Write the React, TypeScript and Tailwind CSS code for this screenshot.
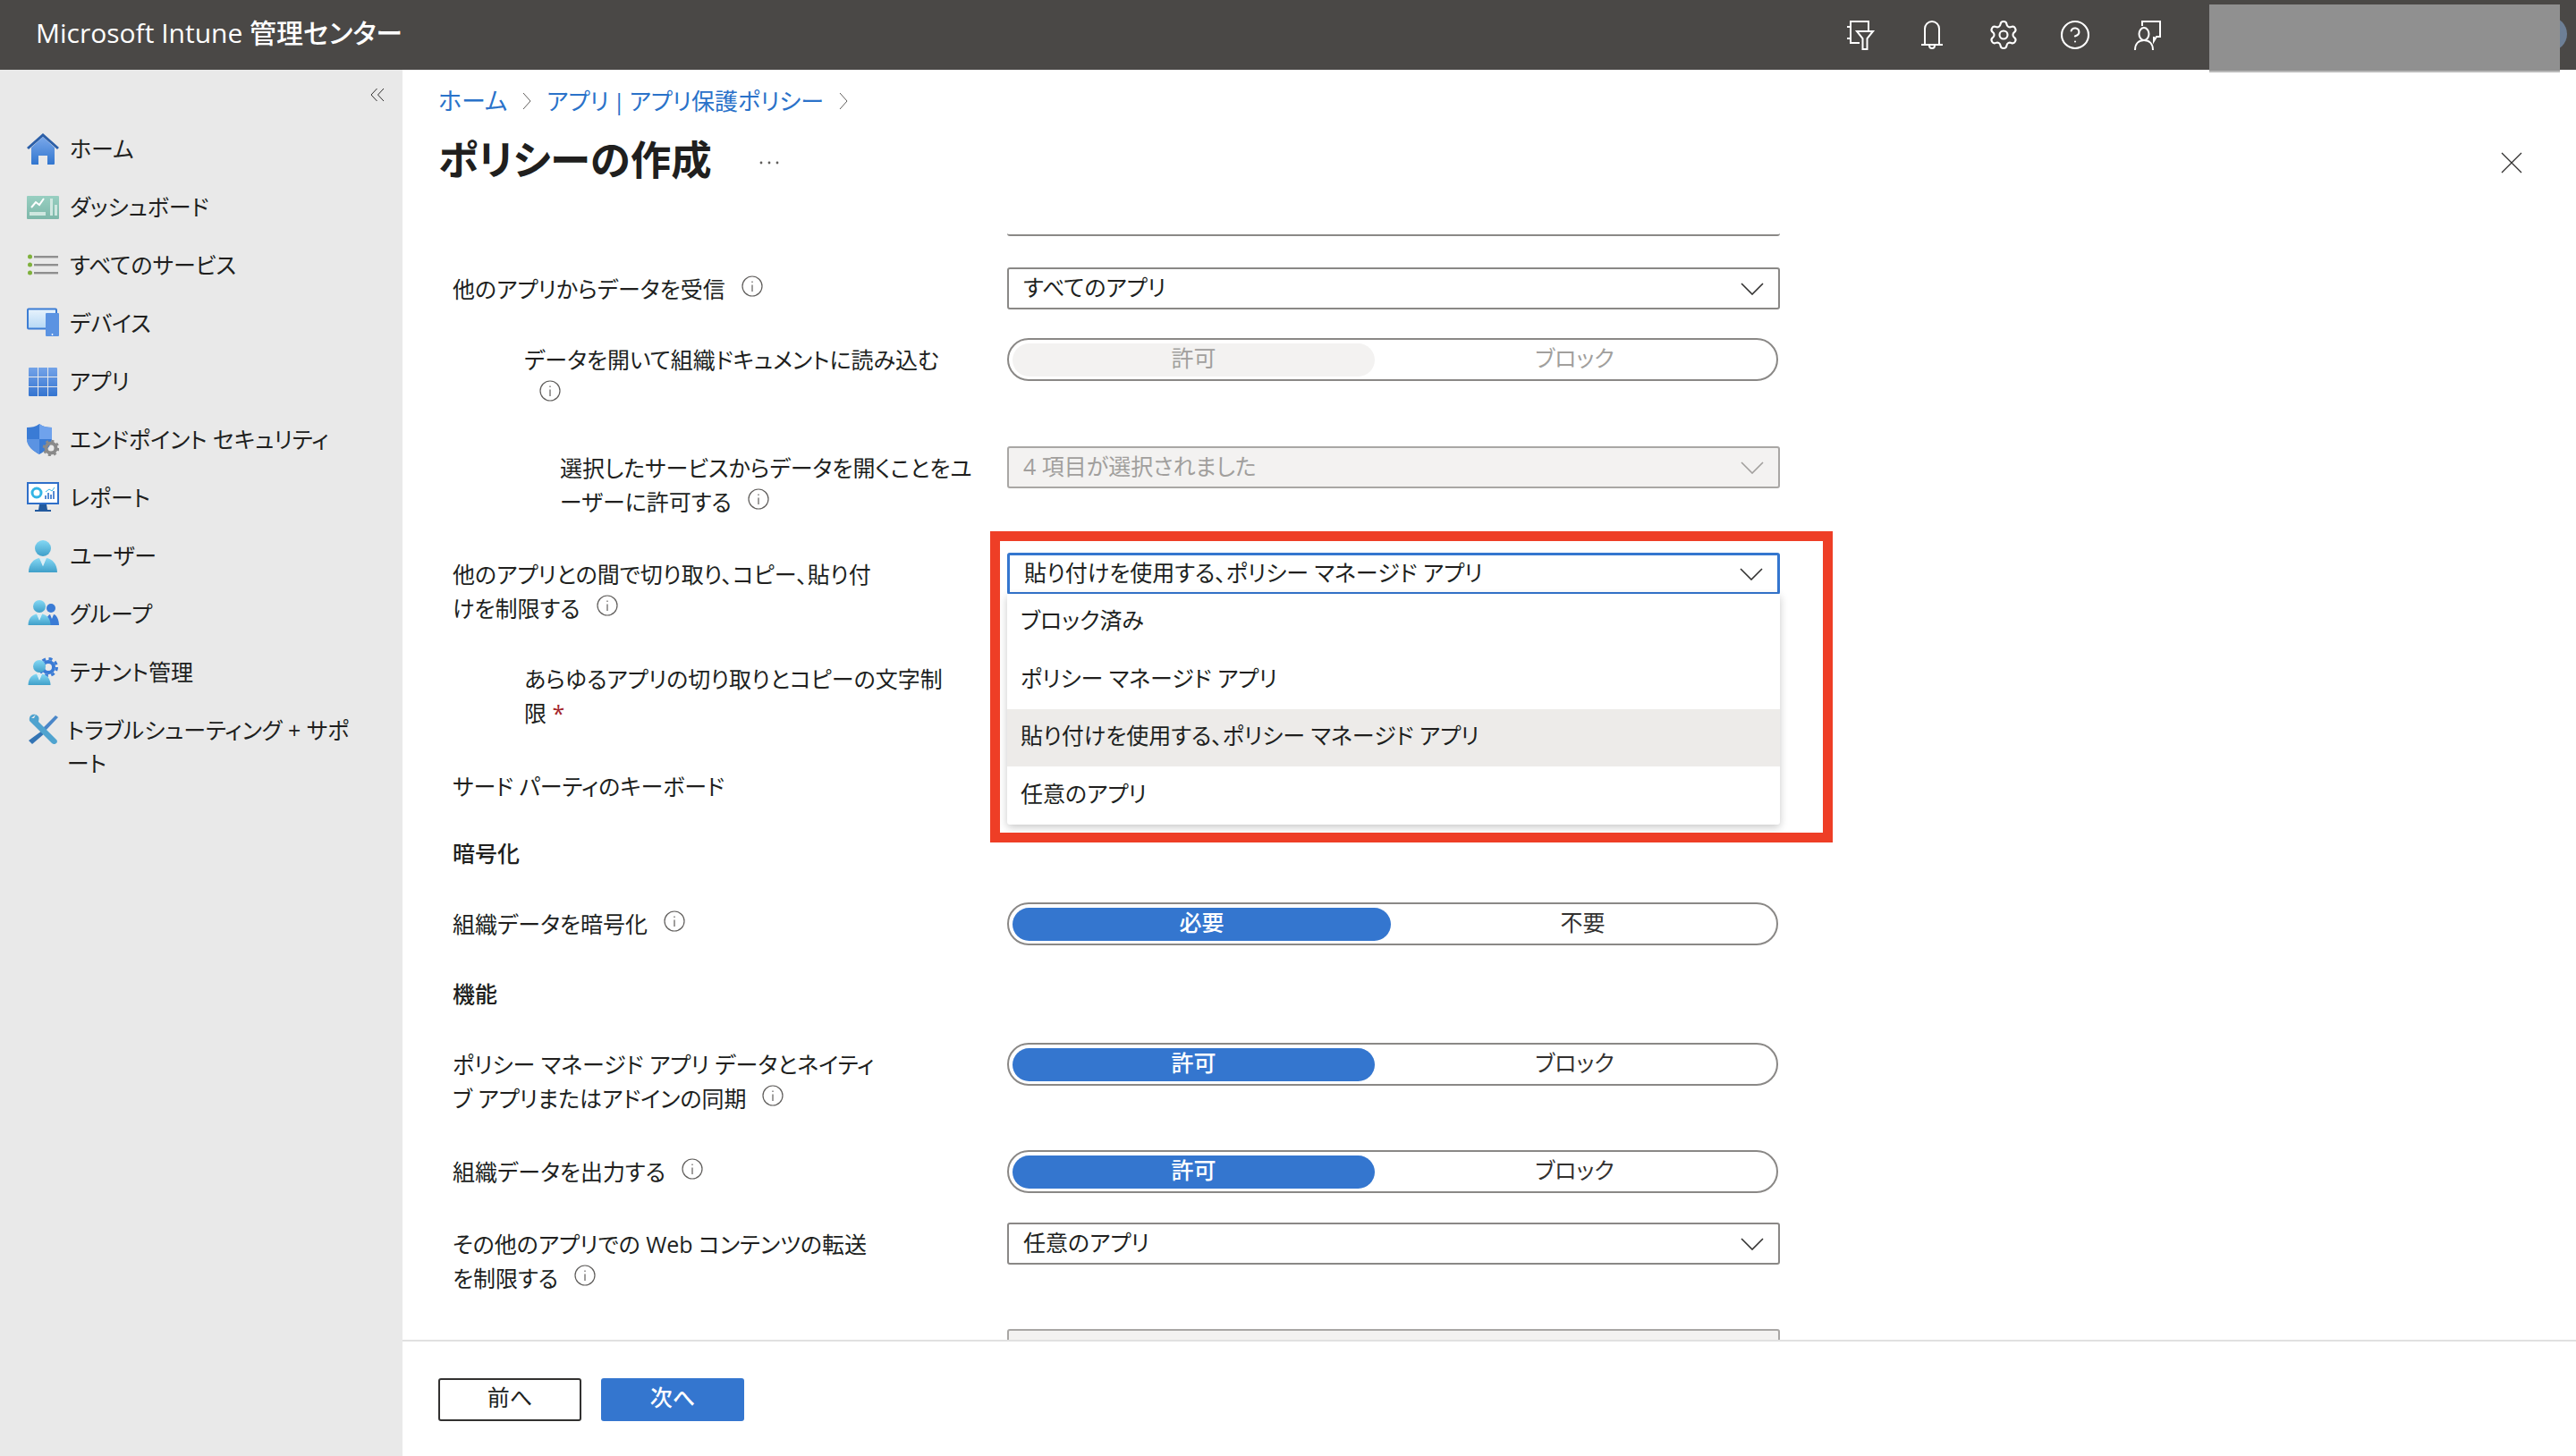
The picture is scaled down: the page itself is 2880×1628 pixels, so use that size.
import type { ReactNode } from 'react'
import { Settings, CircleHelp } from 'lucide-react'

const blueGrad = (id: string, a: string, b: string) => (
  <defs>
    <linearGradient id={id} x1="0" y1="0" x2="0" y2="1">
      <stop offset="0" stopColor={a} />
      <stop offset="1" stopColor={b} />
    </linearGradient>
  </defs>
)

function Person({ id, scale = 1, dx = 0, dy = 0 }: { id: string; scale?: number; dx?: number; dy?: number }) {
  return (
    <g transform={`translate(${dx} ${dy}) scale(${scale})`}>
      {blueGrad(id, '#84d8f4', '#3f9fc9')}
      <circle cx="18" cy="9" r="9" fill={`url(#${id})`} />
      <path d="M2 36C2 26 8 21 14 20L18 29L22 20C28 21 34 26 34 36Z" fill={`url(#${id})`} />
      <path d="M14.5 20H21.5L18 29Z" fill="#d9eff8" />
    </g>
  )
}

const navIcons: Record<string, ReactNode> = {
  home: (
    <>
      {blueGrad('g-home', '#7aa8ea', '#3276cf')}
      <path d="M5 16L18 4L31 16V34a1 1 0 0 1-1 1H23V25H13V35H6a1 1 0 0 1-1-1Z" fill="url(#g-home)" />
      <path d="M1 17L18 2L35 17" fill="none" stroke="#2c5fa8" strokeWidth="3" />
    </>
  ),
  dash: (
    <>
      {blueGrad('g-dash', '#98cfc1', '#7db7a9')}
      <rect y="5" width="36" height="26" rx="1" fill="url(#g-dash)" />
      <path d="M5 18L10 12L14 15L19 8" fill="none" stroke="#fff" strokeWidth="2" />
      <rect x="3" y="23" width="18" height="4" fill="#cfe7e0" />
      <rect x="26" y="8" width="3" height="19" fill="#cfe7e0" />
      <rect x="31" y="15" width="3" height="12" fill="#cfe7e0" />
    </>
  ),
  list: (
    <>
      {[7, 16, 25].map((y) => (
        <g key={y}>
          <circle cx="3.5" cy={y + 1} r="2.5" fill="#7fb13c" />
          <rect x="8" y={y} width="27" height="2.4" fill="#8f8f8f" />
        </g>
      ))}
    </>
  ),
  device: (
    <>
      {blueGrad('g-dev', '#e8f3fc', '#b5d8f5')}
      <rect x="1" y="1.5" width="32" height="22" rx="1" fill="url(#g-dev)" stroke="#3c7dd4" strokeWidth="2" />
      <rect x="21" y="6" width="15" height="26" rx="1" fill="#5b93e2" />
      <circle cx="28.5" cy="30" r="0.9" fill="#fff" />
    </>
  ),
  apps: (
    <>
      {blueGrad('g-apps', '#74a3e8', '#3474d0')}
      <mask id="m-apps">
        {[2, 13, 24].flatMap((x) =>
          [2, 13, 24].map((y) => <rect key={`${x}-${y}`} x={x} y={y} width="10" height="10" fill="#fff" />)
        )}
      </mask>
      <rect x="2" y="2" width="32" height="32" rx="1" fill="url(#g-apps)" mask="url(#m-apps)" />
    </>
  ),
  shield: (
    <>
      <path d="M14 0C18 3 23 4 28 4V16C28 25 21 30 14 34C7 30 0 25 0 16V4C5 4 10 3 14 0Z" fill="#3a7bd5" />
      <path d="M14 0C18 3 23 4 28 4V17H14Z" fill="#6fa2ec" />
      <path d="M0 17H14V34C7 30 0 25 0 17Z" fill="#5b93e2" />
      <circle cx="27" cy="27" r="5.5" fill="none" stroke="#8a8a8a" strokeWidth="4" />
      <circle cx="27" cy="27" r="8" fill="none" stroke="#8a8a8a" strokeWidth="2.6" strokeDasharray="3 3.3" />
    </>
  ),
  report: (
    <>
      <rect x="1" y="1" width="34" height="23" fill="#fff" stroke="#2f6fc9" strokeWidth="2" />
      <circle cx="11" cy="12" r="5" fill="none" stroke="#33b5e5" strokeWidth="3" />
      <path d="M21 19V15M24 19V12M27 19V14M30 19V10" stroke="#2f6fc9" strokeWidth="1.6" />
      <path d="M21 11L25 8L28 10L31 6" stroke="#33b5e5" strokeWidth="1" fill="none" />
      <path d="M14 25H22L23 31H27V33H9V31H13Z" fill="#235a9e" />
    </>
  ),
  user: <Person id="g-user" />,
  group: (
    <>
      <circle cx="27" cy="11" r="5" fill="#3a7bd5" />
      <path d="M21 30C21 23 24 18 26 18L28 23L30 18C33 18 36 24 36 30Z" fill="#3a7bd5" />
      <Person id="g-grp" scale={0.78} dy={2} />
    </>
  ),
  tenant: (
    <>
      <circle cx="24" cy="12" r="6" fill="none" stroke="#3a7bd5" strokeWidth="4" />
      <circle cx="24" cy="12" r="9.5" fill="none" stroke="#3a7bd5" strokeWidth="3" strokeDasharray="4 3.5" />
      <Person id="g-ten" scale={0.78} dy={4} />
    </>
  ),
  tools: (
    <>
      <path d="M32 2L35 4L20 20L17 17Z" fill="#4a86c8" />
      <path d="M17 19L20 22L6 34L2 30Z" fill="#3374b4" />
      <path d="M10 1C6 0 2 2 3 8L8 13L28 33C31 36 36 32 33 29L13 9C14 5 14 3 10 1L8 5L5 5Z" fill="#4fa3cf" />
    </>
  )
}

const navItems = [
  ['home', 'ホーム'],
  ['dash', 'ダッシュボード'],
  ['list', 'すべてのサービス'],
  ['device', 'デバイス'],
  ['apps', 'アプリ'],
  ['shield', 'エンドポイント セキュリティ'],
  ['report', 'レポート'],
  ['user', 'ユーザー'],
  ['group', 'グループ'],
  ['tenant', 'テナント管理']
]

function NavIcon({ name }: { name: string }) {
  return (
    <svg viewBox="0 0 36 36" className="w-9 h-9 shrink-0">
      {navIcons[name]}
    </svg>
  )
}

function Info({ className = 'ml-[18px]' }: { className?: string }) {
  return (
    <svg viewBox="0 0 24 24" className={`inline-block w-6 h-6 align-[1px] ${className}`} fill="none">
      <circle cx="12" cy="12" r="11" stroke="#605e5c" strokeWidth="1.2" />
      <path d="M12 10.5V18M12 6.5V8" stroke="#605e5c" strokeWidth="1.2" />
    </svg>
  )
}

function Chevron({ color = '#323130' }: { color?: string }) {
  return (
    <svg viewBox="0 0 26 14" className="w-[26px] h-[14px]" fill="none">
      <path d="M1 1L13 13L25 1" stroke={color} strokeWidth="1.6" />
    </svg>
  )
}

function Select({ value, disabled, active }: { value: string; disabled?: boolean; active?: boolean }) {
  const tone = active
    ? 'border-[3px] border-[#3476cf] text-[#201f1e] bg-white'
    : disabled
      ? 'border-2 border-[#a9a7a5] text-[#a19f9d] bg-[#f3f2f1]'
      : 'border-2 border-[#8a8886] text-[#201f1e] bg-white'
  return (
    <div className={`h-[47px] w-[864px] rounded-[3px] flex items-center justify-between pl-4 pr-[16px] ${tone}`}>
      <span className="pb-[2px]">{value}</span>
      <Chevron color={disabled ? '#a19f9d' : '#323130'} />
    </div>
  )
}

function Toggle({ left, right, wide, disabled }: { left: string; right: string; wide?: boolean; disabled?: boolean }) {
  return (
    <div className="h-[48px] w-[862px] rounded-full border-2 border-[#8a8886] flex items-center px-1">
      <div
        className={`h-[37px] pb-[3px] rounded-full flex items-center justify-center ${wide ? 'w-[423px]' : 'w-[405px]'} ${
          disabled ? 'bg-[#f3f2f1] text-[#a19f9d]' : 'bg-[#3476cf] text-white font-medium'
        }`}
      >
        {left}
      </div>
      <div className={`flex-1 text-center pb-[3px] pl-[2px] ${disabled ? 'text-[#a19f9d]' : 'text-[#323130]'}`}>{right}</div>
    </div>
  )
}

function Row({ h, indent = '', label, children }: { h: string; indent?: string; label: ReactNode; children?: ReactNode }) {
  return (
    <div className={`flex items-start ${h}`}>
      <div className={`w-[620px] pt-[5px] leading-[38px] whitespace-nowrap ${indent}`}>{label}</div>
      {children}
    </div>
  )
}

export default function App() {
  return (
    <div className="relative w-[2880px] h-[1628px] flex flex-col overflow-hidden bg-white text-[25px] text-[#201f1e] font-['Open_Sans','Noto_Sans_CJK_JP',sans-serif] [font-feature-settings:'palt']">
      <header className="h-[78px] shrink-0 bg-[#4a4846] flex items-center text-white">
        <div className="w-[2062px] pl-10 pb-1 text-[30px] font-medium leading-none">Microsoft Intune 管理センター</div>
        <div className="flex items-center gap-[44px]">
          <svg viewBox="0 0 36 36" className="w-9 h-9" fill="none" stroke="#fff" strokeWidth="2">
            <path d="M27 13V3H7V27H17M3 9H8M3 22H8M14 14H32L25.5 22V34H20.5V22Z" />
          </svg>
          <svg viewBox="0 0 36 36" className="w-9 h-9" fill="none" stroke="#fff" strokeWidth="2">
            <path d="M10 29V11A8 8 0 0 1 26 11V29M6 29H30M15 30A3 3 0 0 0 21 30" />
          </svg>
          <Settings className="w-9 h-9" strokeWidth={1.4} />
          <CircleHelp className="w-9 h-9" strokeWidth={1.4} />
          <svg viewBox="0 0 36 36" className="w-9 h-9" fill="none" stroke="#fff" strokeWidth="2">
            <path d="M13 8V3H33V20H29L26 25V20" />
            <ellipse cx="15" cy="17" rx="5.5" ry="7" />
            <path d="M5 35C5 28 9 24 15 24C21 24 25 28 25 35" />
          </svg>
        </div>
      </header>

      {/* masked account area, sits over the header */}
      <div className="absolute left-[2832px] top-[19px] w-[38px] h-[38px] rounded-full bg-[#6d7f96]" />
      <div className="absolute left-[2470px] top-[5px] w-[392px] h-[76px] bg-[#909090] border-b-2 border-[#b9b9b9]" />

      <div className="flex-1 flex min-h-0">
        <aside className="w-[450px] shrink-0 bg-[#e9e9e9] text-[#201f1e]">
          <div className="h-[56px] flex items-center justify-end pr-5">
            <svg viewBox="0 0 16 16" className="w-4 h-4" fill="none" stroke="#323130" strokeWidth="1">
              <path d="M7.5 1L1 8L7.5 15M15 1L8.5 8L15 15" />
            </svg>
          </div>
          {navItems.map(([icon, label]) => (
            <div key={icon} className="h-[65px] flex items-center pl-[30px] gap-3 whitespace-nowrap">
              <NavIcon name={icon} />
              <span>{label}</span>
            </div>
          ))}
          <div className="flex items-start pl-[30px] pt-[14px] gap-[9px] leading-[37px] whitespace-nowrap">
            <NavIcon name="tools" />
            <span>
              トラブルシューティング + サポ
              <br />
              ート
            </span>
          </div>
        </aside>

        <main className="flex-1 flex flex-col min-w-0">
          <nav className="h-[70px] shrink-0 pl-10 flex items-center text-[27px] text-[#2a72c9]">
            <span>ホーム</span>
            <svg viewBox="0 0 10 20" className="w-[10px] h-5 mx-[17px]" fill="none" stroke="#605e5c" strokeWidth="1">
              <path d="M1 1L9 10L1 19" />
            </svg>
            <span className="text-[26px]">{'アプリ\u2009|\u2009アプリ保護ポリシー'}</span>
            <svg viewBox="0 0 10 20" className="w-[10px] h-5 mx-[17px]" fill="none" stroke="#605e5c" strokeWidth="1">
              <path d="M1 1L9 10L1 19" />
            </svg>
          </nav>
          <div className="h-[60px] shrink-0 pl-10 pr-[60px] flex items-center">
            <h1 className="text-[45.5px] font-semibold leading-none text-[#201f1e] mt-[2px]">ポリシーの作成</h1>
            <svg viewBox="0 0 24 6" className="w-6 h-[6px] ml-[52px] mt-2" fill="#605e5c">
              <circle cx="3" cy="3" r="1.4" />
              <circle cx="12" cy="3" r="1.4" />
              <circle cx="21" cy="3" r="1.4" />
            </svg>
            <svg viewBox="0 0 24 24" className="w-6 h-6 ml-auto mt-2" fill="none" stroke="#323130" strokeWidth="1.3">
              <path d="M1 1L23 23M23 1L1 23" />
            </svg>
          </div>

          <section className="flex-1 min-h-0 overflow-hidden pl-14">
            <div className="pl-[620px]">
              <div className="w-[864px] h-[56px] border-b-2 border-[#8a8886] rounded-b-[3px]" />
            </div>
            <div className="h-[35px]" />
            <Row h="h-[79px]" label={<>他のアプリからデータを受信<Info /></>}>
              <Select value="すべてのアプリ" />
            </Row>
            <Row
              h="h-[121px]"
              indent="pl-20"
              label={<>データを開いて組織ドキュメントに読み込む<br /><Info className="ml-[17px]" /></>}
            >
              <Toggle left="許可" right="ブロック" disabled />
            </Row>
            <Row
              h="h-[119px]"
              indent="pl-[120px]"
              label={<>選択したサービスからデータを開くことをユ<br />ーザーに許可する<Info /></>}
            >
              <Select value="4 項目が選択されました" disabled />
            </Row>
            <Row h="h-[117px]" label={<>他のアプリとの間で切り取り、コピー、貼り付<br />けを制限する<Info /></>}>
              <div className="relative z-10">
                <Select value="貼り付けを使用する、ポリシー マネージド アプリ" active />
                <div className="absolute left-0 top-[46px] w-[864px] h-[258px] bg-white rounded-b-[3px] shadow-[0_3px_10px_rgba(0,0,0,0.22)] flex flex-col">
                  <div className="h-[64px] pl-[15px] pb-1 flex items-center">ブロック済み</div>
                  <div className="h-[65px] pl-[15px] pb-1 flex items-center">ポリシー マネージド アプリ</div>
                  <div className="h-[64px] pl-[15px] pb-1 flex items-center bg-[#edebe9]">貼り付けを使用する、ポリシー マネージド アプリ</div>
                  <div className="h-[65px] pl-[15px] pb-1 flex items-center">任意のアプリ</div>
                </div>
                {/* annotation frame around the open menu */}
                <div className="absolute left-[-19px] top-[-24px] w-[942px] h-[348px] border-[11px] border-[#ee3e26] pointer-events-none" />
              </div>
            </Row>
            <Row h="h-[120px]" indent="pl-20" label={<>あらゆるアプリの切り取りとコピーの文字制<br />限 <span className="text-[#a4262c]">*</span></>} />
            <Row h="h-[75px]" label="サード パーティのキーボード" />
            <Row h="h-[79px]" label={<span className="font-medium">暗号化</span>} />
            <Row h="h-[78px]" label={<>組織データを暗号化<Info /></>}>
              <Toggle left="必要" right="不要" wide />
            </Row>
            <Row h="h-[79px]" label={<span className="font-medium">機能</span>} />
            <Row
              h="h-[120px]"
              label={<>ポリシー マネージド アプリ データとネイティ<br />ブ アプリまたはアドインの同期<Info /></>}
            >
              <Toggle left="許可" right="ブロック" />
            </Row>
            <Row h="h-[81px]" label={<>組織データを出力する<Info /></>}>
              <Toggle left="許可" right="ブロック" />
            </Row>
            <Row h="h-[119px]" label={<>その他のアプリでの Web コンテンツの転送<br />を制限する<Info /></>}>
              <Select value="任意のアプリ" />
            </Row>
            <div className="flex items-start">
              <div className="w-[620px] pl-[495px] pt-[10px]">
                <Info className="ml-0" />
              </div>
              <Select value="" disabled />
            </div>
          </section>

          <footer className="h-[130px] shrink-0 border-t-2 border-[#e1e1e1] pl-10 pt-[41px] flex items-start gap-[22px]">
            <button className="w-[160px] h-[48px] pb-1 rounded-[3px] border-2 border-[#323130] bg-white">前へ</button>
            <button className="w-[160px] h-[48px] pb-1 rounded-[3px] bg-[#3476cf] text-white font-medium">次へ</button>
          </footer>
        </main>
      </div>
    </div>
  )
}
